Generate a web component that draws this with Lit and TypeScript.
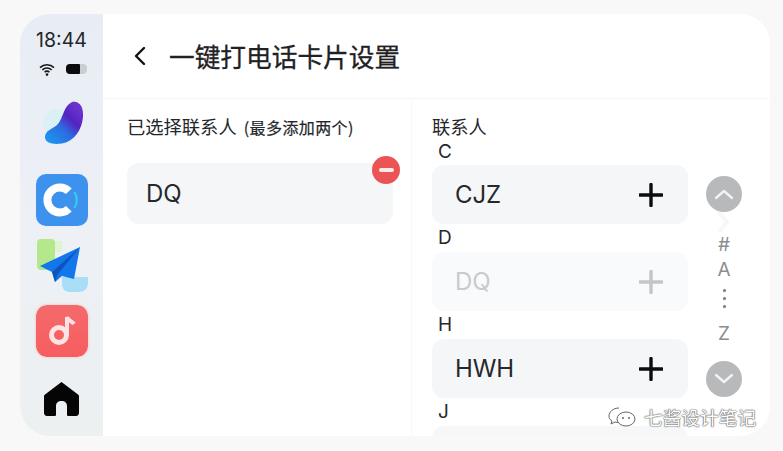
import { LitElement, html, css, svg } from "lit";
import { customElement } from "lit/decorators.js";

const plus = svg`<svg class="plus" viewBox="0 0 24 24" width="24" height="24"><path d="M12 1.500v21M1 12h22" stroke="currentColor" stroke-width="3.400" fill="none" stroke-linecap="round"/></svg>`;

@customElement("app-root")
export class AppRoot extends LitElement {
  static styles = css`
    :host { display: block; width: 783px; height: 451px; overflow: hidden; background: #f8f8f9;
      font-family: Inter, "Noto Sans CJK SC", sans-serif; color: #1c1e20; position: relative; }
    .device { display: flex; height: 422px; margin: 14px 13px 0 20px; border-radius: 30px; overflow: hidden; background: #fff; }
    .side { width: 83px; flex: none; display: flex; flex-direction: column; align-items: center;
      background: linear-gradient(180deg, #e8edf5 0%, #edf0f5 50%, #edf0f1 100%); }
    .time { font-size: 19.500px; line-height: 22px; margin-top: 15px; margin-left: 0; color: #24262a; }
    .status { display: flex; align-items: center; gap: 11px; margin-top: 10px; height: 16px; margin-left: 2px; }
    .app { display: block; flex: none; margin-left: 2px; }
    .logo { margin-top: 23px; margin-left: 0; }
    .cz { margin-top: 28px; margin-left: 1px; }
    .plane { margin-top: 13px; margin-left: 3px; }
    .music { margin-top: 12px; margin-left: 1px; box-shadow: 0 0 3px #f9b7b7; border-radius: 11px; }
    .home { margin-top: 25px; margin-left: 0; }
    .main { flex: 1; min-width: 0; display: flex; flex-direction: column; }
    .head { height: 85px; flex: none; display: flex; align-items: center; border-bottom: 1px solid #f5f6f7; padding-left: 29px; gap: 21px; box-sizing: border-box; }
    .head h1 { margin: 0; font: 400 25.700px/30px "Noto Sans CJK SC", sans-serif; color: #1f2123; -webkit-text-stroke: .3px #1f2123; }
    .body { flex: 1; min-height: 0; display: flex; }
    .left { width: 309px; flex: none; box-sizing: border-box; padding: 15px 18px 0 24px; border-right: 1px solid #f7f8f9; }
    .t { font: 400 18.300px/24px "Noto Sans CJK SC", sans-serif; color: #24262a; margin: 0; white-space: nowrap; }
    .t small { font-size: 16px; margin-left: 3px; letter-spacing: .400px; -webkit-text-stroke: .2px #24262a; }
    .sel { position: relative; margin-top: 24px; }
    .card { height: 59px; border-radius: 12px; background: #f4f6f8; display: flex; align-items: center; justify-content: space-between;
      padding: 0 25px 0 23px; font-size: 24px; letter-spacing: -.1px; color: #26282b; }
    .sel .card { height: 61px; padding-left: 19px; }
    .minus { position: absolute; top: -7px; right: -7px; width: 28px; height: 28px; border-radius: 50%; background: #ea5455; display: flex; align-items: center; justify-content: center; }
    .minus i { display: block; width: 15px; height: 3.500px; border-radius: 2px; background: #fbe9e9; }
    .right { flex: 1; min-width: 0; display: flex; padding: 15px 0 0 20px; }
    .list { width: 256px; flex: none; overflow: hidden; }
    .letter { font-size: 19px; line-height: 28px; height: 28px; padding-left: 6px; color: #26282b; }
    .first { height: 27px; line-height: 27px; }
    .dis .card { color: #c8cacd; background: #f9fafb; }
    .plus { display: block; color: #0b0c0d; }
    .dis .plus { color: #c3c5c7; }
    .stub { height: 20px; border-radius: 12px 12px 0 0; background: #f5f7f8; }
    .rail { flex: none; width: 72px; display: flex; flex-direction: column; align-items: center; padding-top: 62px; }
    .rail .b { width: 36px; height: 36px; border-radius: 50%; background: #b8b9ba; display: flex; align-items: center; justify-content: center; }
    .rail span { font-size: 19px; line-height: 25px; color: #8b8d8f; }
    .chev { display: block; flex: none; }
    .dots { display: flex; flex-direction: column; gap: 5px; margin: 7px 0 13px; }
    .dots i { width: 3px; height: 3px; border-radius: 50%; background: #77797b; display: block; }
    .down { margin-top: 15px; }
    .mark { position: absolute; left: 607px; top: 405px; display: flex; align-items: center; gap: 7px; color: #fff; font: 400 18.700px/24px "Noto Sans CJK SC", sans-serif;
      text-shadow: 0 0 1px #555, 0 0 1px #555, 0 0 2px #888; }
    .mark svg { display: block; }
  `;

  row(name: string, dis = false) {
    return html`<div class="row ${dis ? "dis" : ""}"><div class="card">${name}${plus}</div></div>`;
  }

  render() {
    return html`
      <div class="device">
        <aside class="side">
          <div class="time">18:44</div>
          <div class="status">
            <svg width="16" height="13" viewBox="0 0 16 13"><path d="M1 4.600a10 10 0 0 1 14 0M3.300 7a6.600 6.600 0 0 1 9.400 0M5.600 9.200a3.200 3.200 0 0 1 4.800 0" stroke="#1a1a1a" stroke-width="1.600" fill="none"/><circle cx="8" cy="11.600" r="1.300" fill="#1a1a1a"/></svg>
            <svg width="21" height="10" viewBox="0 0 21 10"><rect width="21" height="10" rx="4" fill="#c9ced3"/><path d="M4 0h9a1 1 0 0 1 1 1v8a1 1 0 0 1-1 1H4a4 4 0 0 1-4-4V4a4 4 0 0 1 4-4z" fill="#0b0b0d"/></svg>
          </div>
          <svg class="app logo" width="46" height="46" viewBox="0 0 46 46">
            <defs>
              <linearGradient id="bean" x1="0.1" y1="0.9" x2="0.8" y2="0.1"><stop offset="0" stop-color="#1c93ee"/><stop offset=".42" stop-color="#2d6adf"/><stop offset=".7" stop-color="#5423c2"/><stop offset="1" stop-color="#6c33cc"/></linearGradient>
            </defs>
            <circle cx="18" cy="23" r="14" fill="#d9f0f5"/>
            <path d="M33 2C40 0 45 7 44 17C43 29 36 41 23 43.500C14 45 6 43 6 37C6 31 13 29 18 25C24 20 24 6 33 2z" fill="url(#bean)"/>
          </svg>
          <svg class="app cz" width="52" height="52" viewBox="0 0 52 52">
            <rect width="52" height="52" rx="10" fill="#3d92ee"/>
            <path d="M32.800 17.200A12.500 12.500 0 1 0 32.800 34.800" stroke="#fff" stroke-width="8" fill="none"/>
            <path d="M38.500 18a16 16 0 0 1 0 16" stroke="#35d0ea" stroke-width="2" fill="none"/>
          </svg>
          <svg class="app plane" width="54" height="54" viewBox="0 0 54 54">
            <rect x="1" y="0" width="18" height="31" rx="4" fill="#b5e78c"/>
            <rect x="19" y="2" width="7" height="11" fill="#e0f3d3"/>
            <path d="M26 38h26v5c0 7-4 10-10 10H34c-5 0-8-3-8-8z" fill="#a8def8"/>
            <path d="M44 8L4 27l12 6 3 10 7-6 12 3z" fill="#1277ea"/>
            <path d="M44 8L16 33l3 10 3-8z" fill="#0d55bd"/>
          </svg>
          <svg class="app music" width="52" height="52" viewBox="0 0 52 52">
            <defs><linearGradient id="red" x1="0" y1="0" x2="0" y2="1"><stop offset="0" stop-color="#f46a6c"/><stop offset="1" stop-color="#f75d5f"/></linearGradient></defs>
            <rect width="52" height="52" rx="11" fill="url(#red)"/>
            <circle cx="23" cy="30" r="7.500" stroke="#fde3e3" stroke-width="5" fill="none"/>
            <path d="M31 31V12c1 4 5 4 7 7" stroke="#fde3e3" stroke-width="4" fill="none"/>
          </svg>
          <svg class="app home" width="35" height="34" viewBox="0 0 35 34"><path d="M17.500 0L34 12.500c.6.500 1 1 1 2V31c0 1.500-1 3-3 3H24.500c-1 0-1.500-.5-1.500-1.500V24c0-3-2-5-5.500-5s-5.500 2-5.500 5v8.500c0 1-.5 1.500-1.500 1.500H3c-2 0-3-1.500-3-3V14.500c0-1 .4-1.500 1-2z" fill="#050505"/></svg>
        </aside>
        <main class="main">
          <header class="head">
            <svg width="16" height="22" viewBox="0 0 16 22"><path d="M12 3L4 11l8 8" stroke="#111" stroke-width="2.400" fill="none" stroke-linecap="round" stroke-linejoin="round"/></svg>
            <h1>一键打电话卡片设置</h1>
          </header>
          <div class="body">
            <section class="left">
              <p class="t">已选择联系人 <small>(最多添加两个)</small></p>
              <div class="sel">
                <div class="card">DQ</div>
                <div class="minus"><i></i></div>
              </div>
            </section>
            <section class="right">
              <div class="list">
                <p class="t">联系人</p>
                <div class="letter first">C</div>
                ${this.row("CJZ")}
                <div class="letter">D</div>
                ${this.row("DQ", true)}
                <div class="letter">H</div>
                ${this.row("HWH")}
                <div class="letter">J</div>
                <div class="stub"></div>
              </div>
              <div class="rail">
                <div class="b"><svg width="20" height="12" viewBox="0 0 20 12"><path d="M2 10l8-7 8 7" stroke="#f2f2f2" stroke-width="2.400" fill="none" stroke-linecap="round" stroke-linejoin="round"/></svg></div>
                <svg class="chev" width="14" height="20" viewBox="0 0 14 20"><path d="M2 0l8 10-8 10" stroke="#f7f7f7" stroke-width="4" fill="none"/></svg>
                <span>#</span>
                <span>A</span>
                <div class="dots"><i></i><i></i><i></i></div>
                <span>Z</span>
                <div class="b down"><svg width="20" height="12" viewBox="0 0 20 12"><path d="M2 2l8 7 8-7" stroke="#f2f2f2" stroke-width="2.400" fill="none" stroke-linecap="round" stroke-linejoin="round"/></svg></div>
              </div>
            </section>
          </div>
        </main>
      </div>
      <div class="mark">
        <svg width="30" height="22" viewBox="0 0 30 22"><g fill="#fff" stroke="#666" stroke-width="1"><path d="M12 2C6 2 2 6 2 10c0 2 1 4 3 5l-1 3 4-2c1 .4 3 .5 4 .5"/><ellipse cx="19" cy="13" rx="9" ry="7"/></g><circle cx="16" cy="12" r="1" fill="#666"/><circle cx="22" cy="12" r="1" fill="#666"/></svg>
        <span>七酱设计笔记</span>
      </div>
    `;
  }
}
